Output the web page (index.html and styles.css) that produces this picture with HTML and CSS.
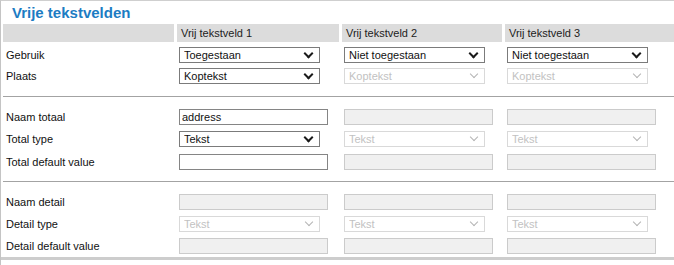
FILE: index.html
```html
<!DOCTYPE html>
<html lang="nl">
<head>
    <meta charset="UTF-8">
    <meta name="viewport" content="width=device-width, initial-scale=1.0">
    <title>Vrije tekstvelden</title>
    <link rel="stylesheet" href="styles.css">
</head>
<body>
    <div class="panel">
        <h2 class="panel-title">Vrije tekstvelden</h2>

        <div class="row head">
            <div></div>
            <div>Vrij tekstveld 1</div>
            <div>Vrij tekstveld 2</div>
            <div>Vrij tekstveld 3</div>
        </div>

        <div class="row r1">
            <div class="label">Gebruik</div>
            <div class="cell"><span class="select"><select><option>Toegestaan</option></select></span></div>
            <div class="cell"><span class="select"><select><option>Niet toegestaan</option></select></span></div>
            <div class="cell"><span class="select"><select><option>Niet toegestaan</option></select></span></div>
        </div>
        <div class="row r1">
            <div class="label">Plaats</div>
            <div class="cell"><span class="select"><select><option>Koptekst</option></select></span></div>
            <div class="cell"><span class="select off"><select disabled><option>Koptekst</option></select></span></div>
            <div class="cell"><span class="select off"><select disabled><option>Koptekst</option></select></span></div>
        </div>

        <div class="sep sep-a"><hr></div>

        <div class="row r2">
            <div class="label">Naam totaal</div>
            <div class="cell"><input type="text" value="address"></div>
            <div class="cell"><input type="text" disabled></div>
            <div class="cell"><input type="text" disabled></div>
        </div>
        <div class="row r2">
            <div class="label">Total type</div>
            <div class="cell"><span class="select"><select><option>Tekst</option></select></span></div>
            <div class="cell"><span class="select off"><select disabled><option>Tekst</option></select></span></div>
            <div class="cell"><span class="select off"><select disabled><option>Tekst</option></select></span></div>
        </div>
        <div class="row r3">
            <div class="label">Total default value</div>
            <div class="cell"><input type="text"></div>
            <div class="cell"><input type="text" disabled></div>
            <div class="cell"><input type="text" disabled></div>
        </div>

        <div class="sep sep-b"><hr></div>

        <div class="row r3">
            <div class="label">Naam detail</div>
            <div class="cell"><input type="text" disabled></div>
            <div class="cell"><input type="text" disabled></div>
            <div class="cell"><input type="text" disabled></div>
        </div>
        <div class="row r2">
            <div class="label">Detail type</div>
            <div class="cell"><span class="select off"><select disabled><option>Tekst</option></select></span></div>
            <div class="cell"><span class="select off"><select disabled><option>Tekst</option></select></span></div>
            <div class="cell"><span class="select off"><select disabled><option>Tekst</option></select></span></div>
        </div>
        <div class="row r3 last">
            <div class="label">Detail default value</div>
            <div class="cell"><input type="text" disabled></div>
            <div class="cell"><input type="text" disabled></div>
            <div class="cell"><input type="text" disabled></div>
        </div>
    </div>
</body>
</html>
```

FILE: styles.css
```css
* { margin: 0; padding: 0; box-sizing: border-box; }
body { background: #fff; font-family: "Liberation Sans", Arial, sans-serif; font-size: 11px; color: #111; }
.panel { min-height: 265px; border-top: 1px solid #cfcfcf; border-left: 1px solid #c4c4c4; padding-left: 2px; }
.panel-title { height: 23px; padding: 3px 0 0 9px; font-size: 15px; font-weight: bold; color: #1c7cc3; }

.row { display: grid; grid-template-columns: 171px 162px 160px 1fr; column-gap: 3px; align-items: center; }
.row.head { height: 18px; margin-bottom: 2px; color: #222; }
.row.head div { height: 18px; line-height: 18px; padding-left: 4px; background: #dcdcdc; }
.r1 { height: 21px; }
.r2 { height: 22px; }
.r3 { height: 23px; }
.label { padding-left: 3px; }
.cell { padding-left: 2px; }

.sep { display: flex; align-items: center; }
.sep-a { height: 20px; }
.sep-b { height: 17px; }
.sep hr { flex: 1; border: none; border-top: 1px solid #a3a3a3; }
.row.last { border-bottom: 3px solid #cdcdcd; margin-left: -2px; padding-left: 2px; height: 25px; }

.select { position: relative; display: inline-block; vertical-align: middle; }
.select select { appearance: none; -webkit-appearance: none; display: block; width: 141px; height: 16px; padding: 0 0 0 4px; border: 1px solid #7b7b7b; border-radius: 0; background: #fff; font: 11px "Liberation Sans", Arial, sans-serif; color: #111; }
.select::after { content: ""; position: absolute; right: 8px; top: 3px; width: 5px; height: 5px; border-right: 2px solid #1a1a1a; border-bottom: 2px solid #1a1a1a; transform: rotate(45deg); pointer-events: none; }
.select.off select { border-color: #cacaca; color: #a8a8a8; }
.select.off::after { border-color: #b4b4b4; border-width: 0 1.5px 1.5px 0; }

input { display: block; width: 149px; height: 16px; padding: 0 2px; border: 1px solid #858585; border-radius: 0; background: #fff; font: 11px "Liberation Sans", Arial, sans-serif; color: #111; }
input:disabled { background: #f0f0f0; border-color: #cbcbcb; }
```
